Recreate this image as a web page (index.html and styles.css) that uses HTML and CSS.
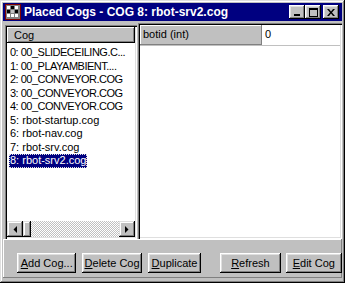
FILE: index.html
```html
<!DOCTYPE html>
<html lang="en">
<head>
  <meta charset="UTF-8">
  <title>Placed Cogs</title>
  <link rel="stylesheet" href="styles.css">
</head>
<body>

  <div class="window">
    <!-- Title bar -->
    <div class="titlebar">
      <svg class="app-icon" width="16" height="16" viewBox="0 0 16 16">
        <rect x="0.5" y="0.5" width="15" height="15" fill="#808080" stroke="#800000"/>
        <rect x="2" y="2" width="3" height="3" fill="#fff"/>
        <rect x="6" y="2" width="3" height="3" fill="#000"/>
        <rect x="10" y="2" width="3" height="3" fill="#fff"/>
        <rect x="2" y="6" width="3" height="3" fill="#000"/>
        <rect x="6" y="6" width="3" height="3" fill="#c0c0c0"/>
        <rect x="10" y="6" width="3" height="3" fill="#000"/>
        <rect x="2" y="10" width="3" height="3" fill="#fff"/>
        <rect x="6" y="10" width="3" height="3" fill="#fff"/>
        <rect x="10" y="10" width="3" height="3" fill="#fff"/>
      </svg>
      <span class="title-text">Placed Cogs - COG 8: rbot-srv2.cog</span>
      <div class="title-buttons">
        <span class="tbtn"><svg width="8" height="7" viewBox="0 0 8 7"><rect x="1" y="5" width="6" height="2" fill="#000"/></svg></span>
        <span class="tbtn"><svg width="9" height="9" viewBox="0 0 9 9"><rect x="0.5" y="0.5" width="8" height="8" fill="none" stroke="#000"/><rect x="0" y="0" width="9" height="2" fill="#000"/></svg></span>
        <span class="tbtn close"><svg width="8" height="7" viewBox="0 0 8 7"><path d="M0 0h2l2 2.5 2-2.5h2l-3 3.5 3 3.5h-2l-2-2.5-2 2.5h-2l3-3.5z" fill="#000"/></svg></span>
      </div>
    </div>

    <!-- Panes -->
    <div class="panes">
      <div class="pane cog-pane">
        <div class="col-header">Cog</div>
        <ul class="cog-list">
          <li class="caps"><span>0: 00_SLIDECEILING.C...</span></li>
          <li class="caps"><span>1: 00_PLAYAMBIENT....</span></li>
          <li class="caps"><span>2: 00_CONVEYOR.COG</span></li>
          <li class="caps"><span>3: 00_CONVEYOR.COG</span></li>
          <li class="caps"><span>4: 00_CONVEYOR.COG</span></li>
          <li><span>5: rbot-startup.cog</span></li>
          <li><span>6: rbot-nav.cog</span></li>
          <li><span>7: rbot-srv.cog</span></li>
          <li class="selected"><span>8: rbot-srv2.cog</span></li>
        </ul>
        <div class="hscroll">
          <span class="sbtn"><svg width="4" height="7" viewBox="0 0 4 7"><path d="M4 0v7L0.5 3.5z" fill="#000"/></svg></span>
          <span class="thumb"></span>
          <span class="track"></span>
          <span class="sbtn"><svg width="4" height="7" viewBox="0 0 4 7"><path d="M0 0v7l3.5-3.5z" fill="#000"/></svg></span>
        </div>
      </div>

      <div class="pane props-pane">
        <div class="prop-row">
          <div class="prop-name">botid (int)</div>
          <div class="prop-value">0</div>
        </div>
      </div>
    </div>

    <!-- Buttons -->
    <div class="button-bar">
      <button class="btn btn-add"><u>A</u>dd Cog...</button>
      <button class="btn btn-delete"><u>D</u>elete Cog</button>
      <button class="btn btn-dup"><u>D</u>uplicate</button>
      <button class="btn btn-refresh"><u>R</u>efresh</button>
      <button class="btn btn-edit"><u>E</u>dit Cog</button>
    </div>
  </div>

</body>
</html>
```

FILE: styles.css
```css
/* General Styles */
body {
  margin: 0;
  background: #c0c0c0;
  font-family: "Liberation Sans", Arial, sans-serif;
  font-size: 11px;
  color: #000;
}
.window {
  width: 345px;
  height: 283px;
  box-sizing: border-box;
  padding: 3px;
  background: #c0c0c0;
  box-shadow: inset -1px -1px #000, inset 1px 1px #dfdfdf, inset -2px -2px #808080, inset 2px 2px #fff;
  display: flex;
  flex-direction: column;
}

/* Title bar */
.titlebar {
  height: 18px;
  flex: none;
  background: #000080;
  color: #fff;
  display: flex;
  align-items: center;
  padding: 0 3px 0 2px;
}
.app-icon {
  flex: none;
  margin-right: 3px;
}
.title-text {
  font-weight: bold;
  font-size: 12px;
  white-space: nowrap;
  flex: 1;
}
.title-buttons {
  display: flex;
  align-items: center;
}
.tbtn {
  width: 16px;
  height: 14px;
  box-sizing: border-box;
  background: #c0c0c0;
  box-shadow: inset -1px -1px #000, inset 1px 1px #fff, inset -2px -2px #808080, inset 2px 2px #dfdfdf;
  display: flex;
  align-items: center;
  justify-content: center;
}
.tbtn svg {
  display: block;
}
.tbtn.close {
  margin-left: 2px;
}

/* Panes */
.panes {
  height: 216px;
  flex: none;
  padding: 2px 0 0 2px;
  display: flex;
  gap: 1px;
}
.pane {
  box-sizing: border-box;
  padding: 2px;
  box-shadow: inset 1px 1px #808080, inset 2px 2px #000, inset -1px -1px #fff, inset -2px -2px #dfdfdf;
  background: #fff;
}
.cog-pane {
  width: 132px;
  margin-top: 2px;
  display: flex;
  flex-direction: column;
}
.props-pane {
  flex: 1;
}
.col-header {
  height: 16px;
  flex: none;
  box-sizing: border-box;
  background: #c0c0c0;
  box-shadow: inset -1px -1px #000, inset 1px 1px #fff, inset -2px -2px #808080;
  padding: 2px 0 0 7px;
}
.cog-list {
  list-style: none;
  margin: 0;
  padding: 3px 0 0 2px;
  flex: 1;
  overflow: hidden;
}
.cog-list li {
  height: 13.5px;
  line-height: 13.5px;
  white-space: nowrap;
}
.cog-list li.caps {
  letter-spacing: -0.5px;
}
.cog-list li span {
  display: inline-block;
  height: 100%;
  padding: 0 1px;
}
.cog-list li.selected span {
  background: #000080;
  color: #fff;
  outline: 1px dotted #dfdfdf;
  outline-offset: -1px;
}

/* Horizontal scroll bar */
.hscroll {
  height: 16px;
  flex: none;
  display: flex;
}
.sbtn,
.thumb {
  flex: none;
  box-sizing: border-box;
  background: #c0c0c0;
  box-shadow: inset -1px -1px #000, inset 1px 1px #dfdfdf, inset -2px -2px #808080, inset 2px 2px #fff;
}
.sbtn {
  width: 16px;
  display: flex;
  align-items: center;
  justify-content: center;
}
.thumb {
  width: 8px;
}
.track {
  flex: 1;
  background: repeating-conic-gradient(#c0c0c0 0 25%, #fff 0 50%) 0 0 / 2px 2px;
}

/* Property grid */
.prop-row {
  display: flex;
  height: 20px;
  border-bottom: 1px solid #c0c0c0;
}
.prop-name {
  width: 122px;
  box-sizing: border-box;
  background: #c0c0c0;
  box-shadow: inset -1px -1px #808080, inset 1px 1px #fff;
  padding: 3px 0 0 3px;
}
.prop-value {
  flex: 1;
  padding: 3px 0 0 3px;
}

/* Button bar */
.button-bar {
  height: 39px;
  flex: none;
  box-sizing: border-box;
  box-shadow: inset -1px -1px #808080, inset 1px 1px #fff;
  padding: 14px 0 0 14px;
  display: flex;
  align-items: flex-start;
}
.btn {
  height: 20px;
  margin: 0;
  padding: 0;
  border: none;
  background: #c0c0c0;
  box-shadow: inset -1px -1px #000, inset 1px 1px #fff, inset -2px -2px #808080, inset 2px 2px #dfdfdf;
  font-family: "Liberation Sans", Arial, sans-serif;
  font-size: 11px;
  color: #000;
  white-space: nowrap;
  overflow: hidden;
}
.btn-add {
  width: 60px;
}
.btn-delete {
  width: 60px;
  margin-left: 6px;
}
.btn-dup {
  width: 54px;
  margin-left: 6px;
}
.btn-refresh {
  width: 61px;
  margin-left: 19px;
}
.btn-edit {
  width: 57px;
  margin-left: 5px;
}
```
